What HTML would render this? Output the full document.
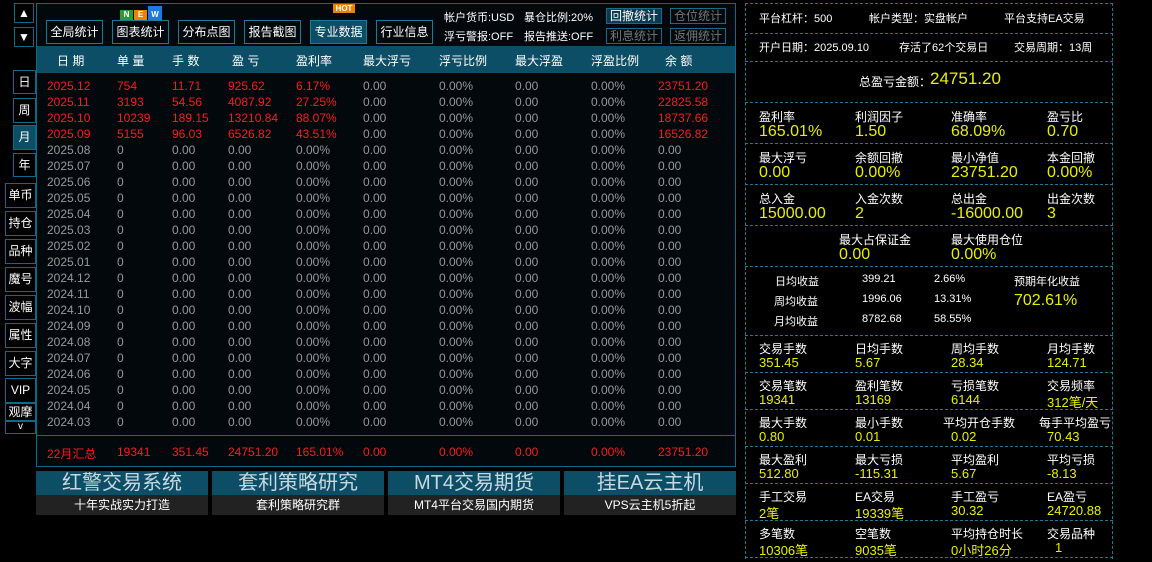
<!DOCTYPE html>
<html><head><meta charset="utf-8"><style>
*{margin:0;padding:0;box-sizing:border-box}
body{width:1152px;height:562px;background:#000;position:relative;overflow:hidden;font-family:"Liberation Sans","Noto Sans CJK SC",sans-serif;color:#fff}
.a{position:absolute;white-space:nowrap}
.sb{position:absolute;border:1px solid #0e6a8a;background:#000;color:#fff;font-size:12px;text-align:center}
.panel{position:absolute;left:36px;top:3px;width:700px;height:464px;border:1px solid #0e6a8a;background:#02080c}
.btn{position:absolute;top:16px;width:57px;height:24px;border:1px solid #1a7a9a;font-size:12px;text-align:center;line-height:22px;color:#fff}
.sm{position:absolute;width:56px;height:16px;border:1px solid #1a6a88;font-size:12px;text-align:center;line-height:14px;color:#777}
.hdr{position:absolute;left:0;top:42px;width:698px;height:27px;background:#0b4e66;font-size:12px;color:#fff}
.row{position:absolute;left:0;height:16px;font-size:12px;color:#999;width:698px}
.row span{position:absolute}
.red{color:#ff1a1a}
.c1{left:10px}.c2{left:80px}.c3{left:135px}.c4{left:191px}.c5{left:259px}.c6{left:326px}.c7{left:402px}.c8{left:478px}.c9{left:554px}.c10{left:621px}
.bn{position:absolute;top:471px;width:172px;height:24px;background:#0b4e66;color:#c8d8e0;font-size:20px;text-align:center;line-height:24px}
.bs{position:absolute;top:495px;width:172px;height:20px;background:#222;color:#fff;font-size:12px;text-align:center;line-height:20px}
.rp{position:absolute;left:745px;top:3px;width:368px;height:556px;border-left:1px dashed #1a7a9a;border-right:1px dashed #1a7a9a}
.hl{position:absolute;left:745px;width:368px;border-top:1px dashed #1a7a9a}
.lb{position:absolute;font-size:12px;color:#fff;white-space:nowrap}
.vl{position:absolute;font-size:16px;color:#e8f000;white-space:nowrap;margin-top:2px}
.vs{position:absolute;font-size:13px;color:#e8f000;white-space:nowrap;margin-top:1px}
</style></head><body>

<div class="sb" style="left:14px;top:3px;width:20px;height:20px;line-height:18px">▲</div>
<div class="sb" style="left:14px;top:27px;width:20px;height:20px;line-height:18px">▼</div>
<div class="sb" style="left:13px;top:70px;width:23px;height:24px;line-height:22px">日</div>
<div class="sb" style="left:13px;top:98px;width:23px;height:25px;line-height:23px">周</div>
<div class="sb" style="left:13px;top:125px;width:23px;height:25px;line-height:23px;background:#0b4e66">月</div>
<div class="sb" style="left:13px;top:153px;width:23px;height:24px;line-height:22px">年</div>
<div class="sb" style="left:5px;top:183px;width:31px;height:25px;line-height:23px">单币</div>
<div class="sb" style="left:5px;top:211px;width:31px;height:25px;line-height:23px">持仓</div>
<div class="sb" style="left:5px;top:239px;width:31px;height:25px;line-height:23px">品种</div>
<div class="sb" style="left:5px;top:267px;width:31px;height:25px;line-height:23px">魔号</div>
<div class="sb" style="left:5px;top:295px;width:31px;height:25px;line-height:23px">波幅</div>
<div class="sb" style="left:5px;top:323px;width:31px;height:25px;line-height:23px">属性</div>
<div class="sb" style="left:5px;top:351px;width:31px;height:25px;line-height:23px">大字</div>
<div class="sb" style="left:5px;top:378px;width:31px;height:25px;line-height:23px">VIP</div>
<div class="sb" style="left:5px;top:403px;width:31px;height:18px;line-height:16px">观摩</div>
<div class="sb" style="left:5px;top:421px;width:31px;height:13px;line-height:10px;font-size:10px">v</div>

<div class="panel">
<div class="btn" style="left:9px">全局统计</div>
<div class="btn" style="left:75px">图表统计</div>
<div class="btn" style="left:141px">分布点图</div>
<div class="btn" style="left:207px">报告截图</div>
<div class="btn" style="left:273px;background:#0b4e66">专业数据</div>
<div class="btn" style="left:339px">行业信息</div>
<div class="a" style="left:83px;top:6px;width:13px;height:10px;background:#2a9a3a;font-size:8px;line-height:10px;text-align:center;color:#fff;font-weight:bold">N</div>
<div class="a" style="left:97px;top:6px;width:13px;height:10px;background:#f08000;font-size:8px;line-height:10px;text-align:center;color:#fff;font-weight:bold">E</div>
<div class="a" style="left:111px;top:2px;width:14px;height:14px;background:#1a7ae0;font-size:8px;line-height:17px;text-align:center;color:#fff;font-weight:bold">W</div>
<div class="a" style="left:296px;top:0px;width:22px;height:9px;background:#f08000;font-size:8px;line-height:9px;text-align:center;color:#fff;font-weight:bold">HOT</div>
<div class="a" style="left:407px;top:5px;font-size:11px">帐户货币:USD</div>
<div class="a" style="left:487px;top:5px;font-size:11px">暴仓比例:20%</div>
<div class="a" style="left:407px;top:24px;font-size:11px">浮亏警报:OFF</div>
<div class="a" style="left:487px;top:24px;font-size:11px">报告推送:OFF</div>
<div class="sm" style="left:569px;top:4px;color:#fff;background:#0b3a50">回撤统计</div>
<div class="sm" style="left:633px;top:4px">仓位统计</div>
<div class="sm" style="left:569px;top:24px">利息统计</div>
<div class="sm" style="left:633px;top:24px">返佣统计</div>

<div class="hdr">
<span class="a" style="left:20px;top:6px">日 期</span><span class="a" style="left:80px;top:6px">单 量</span><span class="a" style="left:135px;top:6px">手 数</span><span class="a" style="left:195px;top:6px">盈 亏</span><span class="a" style="left:259px;top:6px">盈利率</span><span class="a" style="left:326px;top:6px">最大浮亏</span><span class="a" style="left:402px;top:6px">浮亏比例</span><span class="a" style="left:478px;top:6px">最大浮盈</span><span class="a" style="left:554px;top:6px">浮盈比例</span><span class="a" style="left:628px;top:6px">余 额</span>
</div>

<div class="row red" style="top:75px"><span class="c1">2025.12</span><span class="c2">754</span><span class="c3">11.71</span><span class="c4">925.62</span><span class="c5">6.17%</span><span class="c6" style="color:#999">0.00</span><span class="c7" style="color:#999">0.00%</span><span class="c8" style="color:#999">0.00</span><span class="c9" style="color:#999">0.00%</span><span class="c10">23751.20</span></div>
<div class="row red" style="top:91px"><span class="c1">2025.11</span><span class="c2">3193</span><span class="c3">54.56</span><span class="c4">4087.92</span><span class="c5">27.25%</span><span class="c6" style="color:#999">0.00</span><span class="c7" style="color:#999">0.00%</span><span class="c8" style="color:#999">0.00</span><span class="c9" style="color:#999">0.00%</span><span class="c10">22825.58</span></div>
<div class="row red" style="top:107px"><span class="c1">2025.10</span><span class="c2">10239</span><span class="c3">189.15</span><span class="c4">13210.84</span><span class="c5">88.07%</span><span class="c6" style="color:#999">0.00</span><span class="c7" style="color:#999">0.00%</span><span class="c8" style="color:#999">0.00</span><span class="c9" style="color:#999">0.00%</span><span class="c10">18737.66</span></div>
<div class="row red" style="top:123px"><span class="c1">2025.09</span><span class="c2">5155</span><span class="c3">96.03</span><span class="c4">6526.82</span><span class="c5">43.51%</span><span class="c6" style="color:#999">0.00</span><span class="c7" style="color:#999">0.00%</span><span class="c8" style="color:#999">0.00</span><span class="c9" style="color:#999">0.00%</span><span class="c10">16526.82</span></div>
<div class="row" style="top:139px"><span class="c1">2025.08</span><span class="c2">0</span><span class="c3">0.00</span><span class="c4">0.00</span><span class="c5">0.00%</span><span class="c6">0.00</span><span class="c7">0.00%</span><span class="c8">0.00</span><span class="c9">0.00%</span><span class="c10">0.00</span></div>
<div class="row" style="top:155px"><span class="c1">2025.07</span><span class="c2">0</span><span class="c3">0.00</span><span class="c4">0.00</span><span class="c5">0.00%</span><span class="c6">0.00</span><span class="c7">0.00%</span><span class="c8">0.00</span><span class="c9">0.00%</span><span class="c10">0.00</span></div>
<div class="row" style="top:171px"><span class="c1">2025.06</span><span class="c2">0</span><span class="c3">0.00</span><span class="c4">0.00</span><span class="c5">0.00%</span><span class="c6">0.00</span><span class="c7">0.00%</span><span class="c8">0.00</span><span class="c9">0.00%</span><span class="c10">0.00</span></div>
<div class="row" style="top:187px"><span class="c1">2025.05</span><span class="c2">0</span><span class="c3">0.00</span><span class="c4">0.00</span><span class="c5">0.00%</span><span class="c6">0.00</span><span class="c7">0.00%</span><span class="c8">0.00</span><span class="c9">0.00%</span><span class="c10">0.00</span></div>
<div class="row" style="top:203px"><span class="c1">2025.04</span><span class="c2">0</span><span class="c3">0.00</span><span class="c4">0.00</span><span class="c5">0.00%</span><span class="c6">0.00</span><span class="c7">0.00%</span><span class="c8">0.00</span><span class="c9">0.00%</span><span class="c10">0.00</span></div>
<div class="row" style="top:219px"><span class="c1">2025.03</span><span class="c2">0</span><span class="c3">0.00</span><span class="c4">0.00</span><span class="c5">0.00%</span><span class="c6">0.00</span><span class="c7">0.00%</span><span class="c8">0.00</span><span class="c9">0.00%</span><span class="c10">0.00</span></div>
<div class="row" style="top:235px"><span class="c1">2025.02</span><span class="c2">0</span><span class="c3">0.00</span><span class="c4">0.00</span><span class="c5">0.00%</span><span class="c6">0.00</span><span class="c7">0.00%</span><span class="c8">0.00</span><span class="c9">0.00%</span><span class="c10">0.00</span></div>
<div class="row" style="top:251px"><span class="c1">2025.01</span><span class="c2">0</span><span class="c3">0.00</span><span class="c4">0.00</span><span class="c5">0.00%</span><span class="c6">0.00</span><span class="c7">0.00%</span><span class="c8">0.00</span><span class="c9">0.00%</span><span class="c10">0.00</span></div>
<div class="row" style="top:267px"><span class="c1">2024.12</span><span class="c2">0</span><span class="c3">0.00</span><span class="c4">0.00</span><span class="c5">0.00%</span><span class="c6">0.00</span><span class="c7">0.00%</span><span class="c8">0.00</span><span class="c9">0.00%</span><span class="c10">0.00</span></div>
<div class="row" style="top:283px"><span class="c1">2024.11</span><span class="c2">0</span><span class="c3">0.00</span><span class="c4">0.00</span><span class="c5">0.00%</span><span class="c6">0.00</span><span class="c7">0.00%</span><span class="c8">0.00</span><span class="c9">0.00%</span><span class="c10">0.00</span></div>
<div class="row" style="top:299px"><span class="c1">2024.10</span><span class="c2">0</span><span class="c3">0.00</span><span class="c4">0.00</span><span class="c5">0.00%</span><span class="c6">0.00</span><span class="c7">0.00%</span><span class="c8">0.00</span><span class="c9">0.00%</span><span class="c10">0.00</span></div>
<div class="row" style="top:315px"><span class="c1">2024.09</span><span class="c2">0</span><span class="c3">0.00</span><span class="c4">0.00</span><span class="c5">0.00%</span><span class="c6">0.00</span><span class="c7">0.00%</span><span class="c8">0.00</span><span class="c9">0.00%</span><span class="c10">0.00</span></div>
<div class="row" style="top:331px"><span class="c1">2024.08</span><span class="c2">0</span><span class="c3">0.00</span><span class="c4">0.00</span><span class="c5">0.00%</span><span class="c6">0.00</span><span class="c7">0.00%</span><span class="c8">0.00</span><span class="c9">0.00%</span><span class="c10">0.00</span></div>
<div class="row" style="top:347px"><span class="c1">2024.07</span><span class="c2">0</span><span class="c3">0.00</span><span class="c4">0.00</span><span class="c5">0.00%</span><span class="c6">0.00</span><span class="c7">0.00%</span><span class="c8">0.00</span><span class="c9">0.00%</span><span class="c10">0.00</span></div>
<div class="row" style="top:363px"><span class="c1">2024.06</span><span class="c2">0</span><span class="c3">0.00</span><span class="c4">0.00</span><span class="c5">0.00%</span><span class="c6">0.00</span><span class="c7">0.00%</span><span class="c8">0.00</span><span class="c9">0.00%</span><span class="c10">0.00</span></div>
<div class="row" style="top:379px"><span class="c1">2024.05</span><span class="c2">0</span><span class="c3">0.00</span><span class="c4">0.00</span><span class="c5">0.00%</span><span class="c6">0.00</span><span class="c7">0.00%</span><span class="c8">0.00</span><span class="c9">0.00%</span><span class="c10">0.00</span></div>
<div class="row" style="top:395px"><span class="c1">2024.04</span><span class="c2">0</span><span class="c3">0.00</span><span class="c4">0.00</span><span class="c5">0.00%</span><span class="c6">0.00</span><span class="c7">0.00%</span><span class="c8">0.00</span><span class="c9">0.00%</span><span class="c10">0.00</span></div>
<div class="row" style="top:411px"><span class="c1">2024.03</span><span class="c2">0</span><span class="c3">0.00</span><span class="c4">0.00</span><span class="c5">0.00%</span><span class="c6">0.00</span><span class="c7">0.00%</span><span class="c8">0.00</span><span class="c9">0.00%</span><span class="c10">0.00</span></div>
<div class="a" style="left:0;top:431px;width:698px;border-top:1px solid #0e6a8a"></div>
<div class="row red" style="top:441px"><span class="c1">22月汇总</span><span class="c2">19341</span><span class="c3">351.45</span><span class="c4">24751.20</span><span class="c5">165.01%</span><span class="c6">0.00</span><span class="c7">0.00%</span><span class="c8">0.00</span><span class="c9">0.00%</span><span class="c10">23751.20</span></div>
</div>

<div class="bn" style="left:36px">红警交易系统</div><div class="bs" style="left:36px">十年实战实力打造</div>
<div class="bn" style="left:212px">套利策略研究</div><div class="bs" style="left:212px">套利策略研究群</div>
<div class="bn" style="left:388px">MT4交易期货</div><div class="bs" style="left:388px">MT4平台交易国内期货</div>
<div class="bn" style="left:564px">挂EA云主机</div><div class="bs" style="left:564px">VPS云主机5折起</div>

<div class="rp"></div>
<div class="hl" style="top:3px"></div><div class="hl" style="top:33px"></div><div class="hl" style="top:61px"></div><div class="hl" style="top:102px"></div><div class="hl" style="top:143px"></div><div class="hl" style="top:184px"></div><div class="hl" style="top:225px"></div><div class="hl" style="top:266px"></div><div class="hl" style="top:335px"></div><div class="hl" style="top:372px"></div><div class="hl" style="top:409px"></div><div class="hl" style="top:446px"></div><div class="hl" style="top:483px"></div><div class="hl" style="top:520px"></div><div class="hl" style="top:557px"></div>

<div class="lb" style="left:759px;top:10px;font-size:11px">平台杠杆：500</div>
<div class="lb" style="left:869px;top:10px;font-size:11px">帐户类型：实盘帐户</div>
<div class="lb" style="left:1004px;top:10px;font-size:11px">平台支持EA交易</div>
<div class="lb" style="left:759px;top:39px;font-size:11px">开户日期：2025.09.10</div>
<div class="lb" style="left:899px;top:39px;font-size:11px">存活了62个交易日</div>
<div class="lb" style="left:1014px;top:39px;font-size:11px">交易周期：13周</div>
<div class="lb" style="left:859px;top:73px">总盈亏金额：</div>
<div class="vl" style="left:930px;top:67px;font-size:17px">24751.20</div>

<div class="lb" style="left:759px;top:108px">盈利率</div><div class="vl" style="left:759px;top:121px">165.01%</div>
<div class="lb" style="left:855px;top:108px">利润因子</div><div class="vl" style="left:855px;top:121px">1.50</div>
<div class="lb" style="left:951px;top:108px">准确率</div><div class="vl" style="left:951px;top:121px">68.09%</div>
<div class="lb" style="left:1047px;top:108px">盈亏比</div><div class="vl" style="left:1047px;top:121px">0.70</div>

<div class="lb" style="left:759px;top:149px">最大浮亏</div><div class="vl" style="left:759px;top:162px">0.00</div>
<div class="lb" style="left:855px;top:149px">余额回撤</div><div class="vl" style="left:855px;top:162px">0.00%</div>
<div class="lb" style="left:951px;top:149px">最小净值</div><div class="vl" style="left:951px;top:162px">23751.20</div>
<div class="lb" style="left:1047px;top:149px">本金回撤</div><div class="vl" style="left:1047px;top:162px">0.00%</div>

<div class="lb" style="left:759px;top:190px">总入金</div><div class="vl" style="left:759px;top:203px">15000.00</div>
<div class="lb" style="left:855px;top:190px">入金次数</div><div class="vl" style="left:855px;top:203px">2</div>
<div class="lb" style="left:951px;top:190px">总出金</div><div class="vl" style="left:951px;top:203px">-16000.00</div>
<div class="lb" style="left:1047px;top:190px">出金次数</div><div class="vl" style="left:1047px;top:203px">3</div>

<div class="lb" style="left:839px;top:231px">最大占保证金</div><div class="vl" style="left:839px;top:244px">0.00</div>
<div class="lb" style="left:951px;top:231px">最大使用仓位</div><div class="vl" style="left:951px;top:244px">0.00%</div>

<div class="lb" style="left:775px;top:273px;font-size:11px">日均收益</div><div class="lb" style="left:862px;top:273px;font-size:11px">399.21</div><div class="lb" style="left:934px;top:273px;font-size:11px">2.66%</div>
<div class="lb" style="left:774px;top:293px;font-size:11px">周均收益</div><div class="lb" style="left:862px;top:293px;font-size:11px">1996.06</div><div class="lb" style="left:934px;top:293px;font-size:11px">13.31%</div>
<div class="lb" style="left:774px;top:313px;font-size:11px">月均收益</div><div class="lb" style="left:862px;top:313px;font-size:11px">8782.68</div><div class="lb" style="left:934px;top:313px;font-size:11px">58.55%</div>
<div class="lb" style="left:1014px;top:273px;font-size:11px">预期年化收益</div><div class="vl" style="left:1014px;top:290px">702.61%</div>

<div class="lb" style="left:759px;top:340px">交易手数</div><div class="vs" style="left:759px;top:354px">351.45</div>
<div class="lb" style="left:855px;top:340px">日均手数</div><div class="vs" style="left:855px;top:354px">5.67</div>
<div class="lb" style="left:951px;top:340px">周均手数</div><div class="vs" style="left:951px;top:354px">28.34</div>
<div class="lb" style="left:1047px;top:340px">月均手数</div><div class="vs" style="left:1047px;top:354px">124.71</div>

<div class="lb" style="left:759px;top:377px">交易笔数</div><div class="vs" style="left:759px;top:391px">19341</div>
<div class="lb" style="left:855px;top:377px">盈利笔数</div><div class="vs" style="left:855px;top:391px">13169</div>
<div class="lb" style="left:951px;top:377px">亏损笔数</div><div class="vs" style="left:951px;top:391px">6144</div>
<div class="lb" style="left:1047px;top:377px">交易频率</div><div class="vs" style="left:1047px;top:391px">312笔/天</div>

<div class="lb" style="left:759px;top:414px">最大手数</div><div class="vs" style="left:759px;top:428px">0.80</div>
<div class="lb" style="left:855px;top:414px">最小手数</div><div class="vs" style="left:855px;top:428px">0.01</div>
<div class="lb" style="left:943px;top:414px">平均开仓手数</div><div class="vs" style="left:951px;top:428px">0.02</div>
<div class="lb" style="left:1039px;top:414px">每手平均盈亏</div><div class="vs" style="left:1047px;top:428px">70.43</div>

<div class="lb" style="left:759px;top:451px">最大盈利</div><div class="vs" style="left:759px;top:465px">512.80</div>
<div class="lb" style="left:855px;top:451px">最大亏损</div><div class="vs" style="left:855px;top:465px">-115.31</div>
<div class="lb" style="left:951px;top:451px">平均盈利</div><div class="vs" style="left:951px;top:465px">5.67</div>
<div class="lb" style="left:1047px;top:451px">平均亏损</div><div class="vs" style="left:1047px;top:465px">-8.13</div>

<div class="lb" style="left:759px;top:488px">手工交易</div><div class="vs" style="left:759px;top:502px">2笔</div>
<div class="lb" style="left:855px;top:488px">EA交易</div><div class="vs" style="left:855px;top:502px">19339笔</div>
<div class="lb" style="left:951px;top:488px">手工盈亏</div><div class="vs" style="left:951px;top:502px">30.32</div>
<div class="lb" style="left:1047px;top:488px">EA盈亏</div><div class="vs" style="left:1047px;top:502px">24720.88</div>

<div class="lb" style="left:759px;top:525px">多笔数</div><div class="vs" style="left:759px;top:539px">10306笔</div>
<div class="lb" style="left:855px;top:525px">空笔数</div><div class="vs" style="left:855px;top:539px">9035笔</div>
<div class="lb" style="left:951px;top:525px">平均持仓时长</div><div class="vs" style="left:951px;top:539px">0小时26分</div>
<div class="lb" style="left:1047px;top:525px">交易品种</div><div class="vs" style="left:1055px;top:539px">1</div>
</body></html>
